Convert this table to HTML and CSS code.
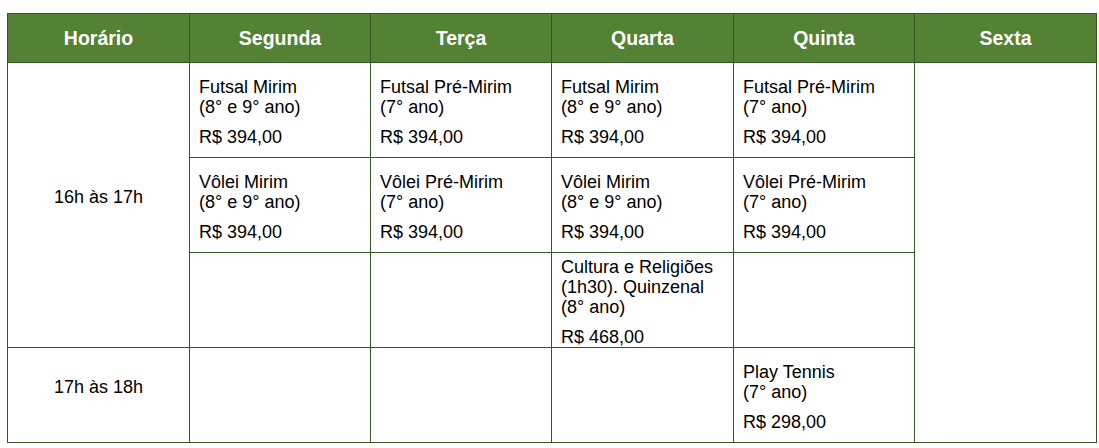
FILE: index.html
```html
<!DOCTYPE html>
<html lang="pt-BR">
<head>
<meta charset="utf-8">
<title>Horários</title>
<link rel="stylesheet" href="styles.css">
</head>
<body>
<table class="grade">
  <colgroup>
    <col class="c1"><col class="c2"><col class="c3"><col class="c4"><col class="c5"><col class="c6">
  </colgroup>
  <thead>
    <tr class="head">
      <th>Horário</th><th>Segunda</th><th>Terça</th><th>Quarta</th><th>Quinta</th><th>Sexta</th>
    </tr>
  </thead>
  <tbody>
    <tr>
      <td class="time" rowspan="3">16h às 17h</td>
      <td class="act"><div class="name">Futsal Mirim<br>(8° e 9° ano)</div><div class="price">R$ 394,00</div></td>
      <td class="act"><div class="name">Futsal Pré-Mirim<br>(7° ano)</div><div class="price">R$ 394,00</div></td>
      <td class="act"><div class="name">Futsal Mirim<br>(8° e 9° ano)</div><div class="price">R$ 394,00</div></td>
      <td class="act"><div class="name">Futsal Pré-Mirim<br>(7° ano)</div><div class="price">R$ 394,00</div></td>
      <td class="empty" rowspan="4"></td>
    </tr>
    <tr>
      <td class="act"><div class="name">Vôlei Mirim<br>(8° e 9° ano)</div><div class="price">R$ 394,00</div></td>
      <td class="act"><div class="name">Vôlei Pré-Mirim<br>(7° ano)</div><div class="price">R$ 394,00</div></td>
      <td class="act"><div class="name">Vôlei Mirim<br>(8° e 9° ano)</div><div class="price">R$ 394,00</div></td>
      <td class="act"><div class="name">Vôlei Pré-Mirim<br>(7° ano)</div><div class="price">R$ 394,00</div></td>
    </tr>
    <tr>
      <td class="act"></td>
      <td class="act"></td>
      <td class="act"><div class="name">Cultura e Religiões<br>(1h30). Quinzenal<br>(8° ano)</div><div class="price">R$ 468,00</div></td>
      <td class="act"></td>
    </tr>
    <tr>
      <td class="time">17h às 18h</td>
      <td class="act"></td>
      <td class="act"></td>
      <td class="act"></td>
      <td class="act"><div class="name">Play Tennis<br>(7° ano)</div><div class="price">R$ 298,00</div></td>
    </tr>
  </tbody>
</table>
</body>
</html>
```

FILE: styles.css
```css
html, body {
  margin: 0;
  padding: 0;
  background: #ffffff;
}

body {
  padding: 13px 0 0 7px;
  font-family: "Liberation Sans", Arial, sans-serif;
  color: #000000;
}

.grade {
  border-collapse: collapse;
  table-layout: fixed;
  width: 1089px;
}

.c1 { width: 182px; }
.c2 { width: 181px; }
.c3 { width: 181px; }
.c4 { width: 182px; }
.c5 { width: 181px; }
.c6 { width: 182px; }

.grade th,
.grade td {
  border: 1px solid #375623;
}

.head th {
  height: 48px;
  padding: 0;
  background: #548235;
  color: #ffffff;
  font-size: 19.5px;
  font-weight: bold;
  text-align: center;
  vertical-align: middle;
}

.grade tbody tr {
  height: 95px;
}

.time {
  font-size: 18px;
  text-align: center;
  vertical-align: middle;
  padding: 0 0 16px 0;
}

.act {
  font-size: 18px;
  text-align: left;
  vertical-align: middle;
  padding: 3px 8px 0 9px;
  line-height: 20px;
}

.price {
  margin-top: 10px;
}

.empty {
  padding: 0;
}
```
